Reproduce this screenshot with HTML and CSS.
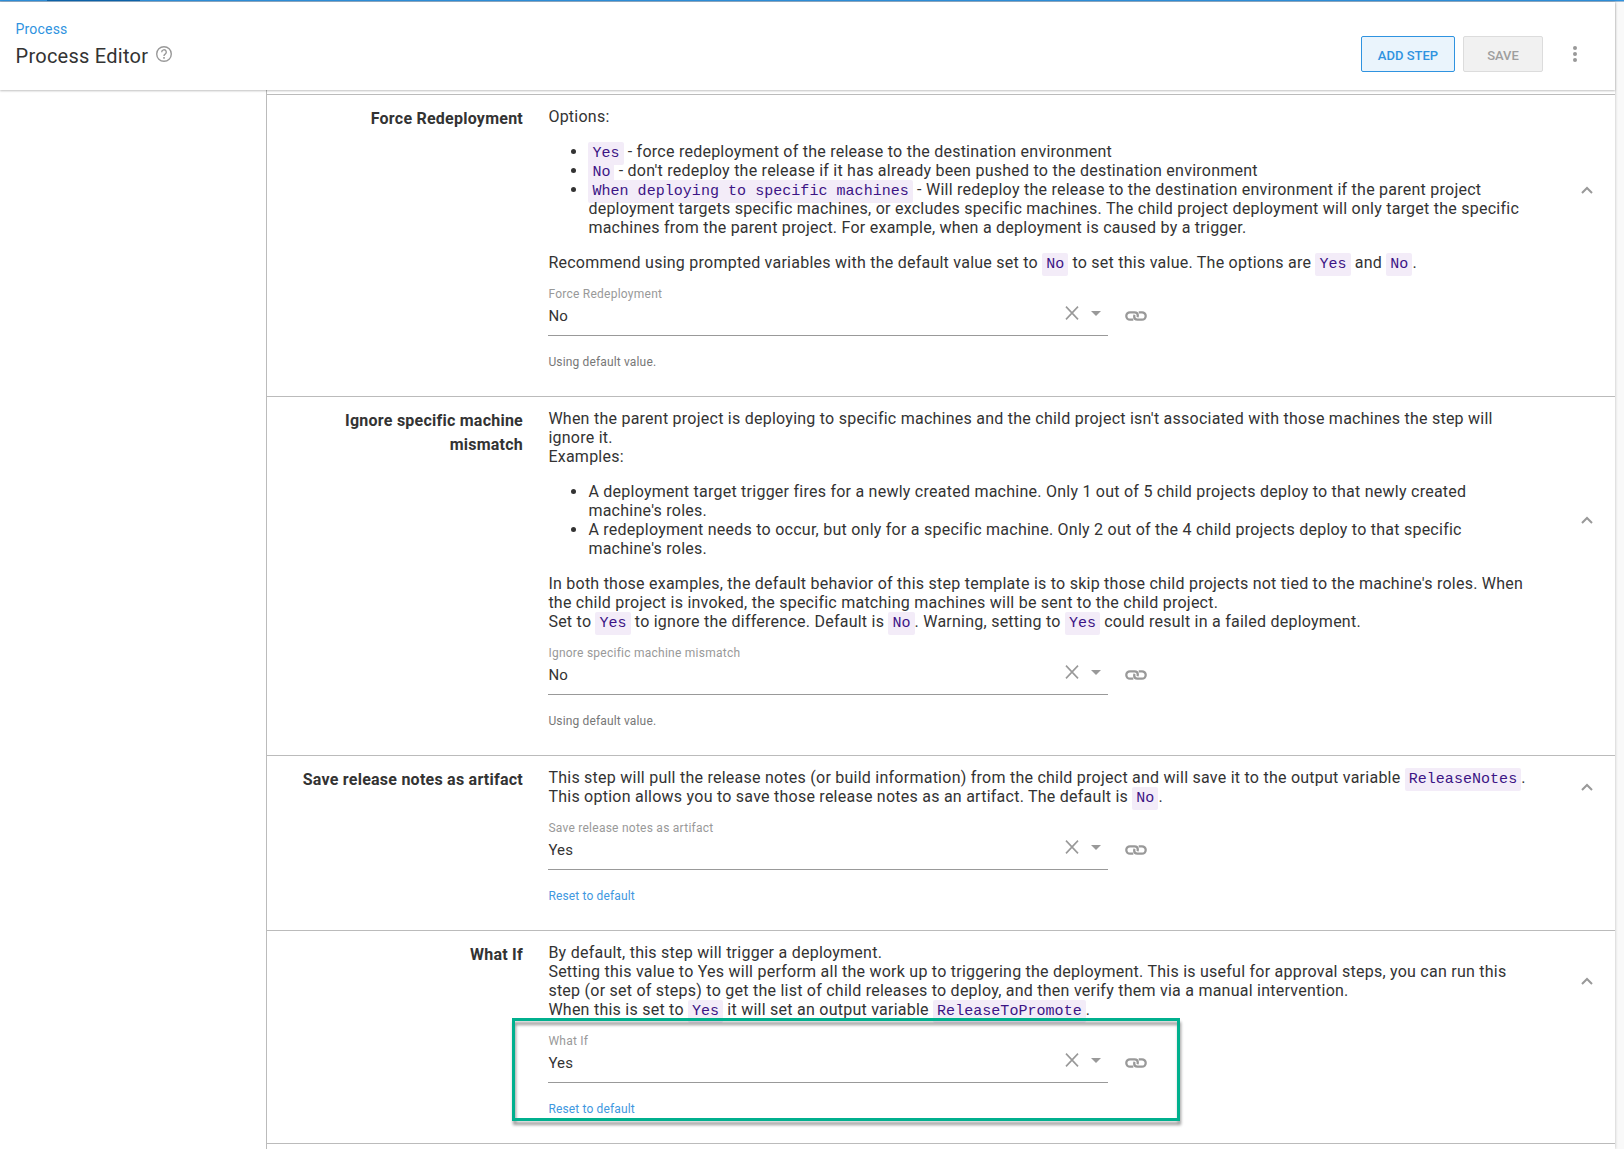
FILE: index.html
```html
<!DOCTYPE html>
<html lang="en">
<head>
<meta charset="utf-8">
<title>Process Editor</title>
<link rel="stylesheet" href="styles.css">
</head>
<body>
<svg class="sprite" aria-hidden="true">
  <symbol id="clear" viewBox="0 0 14 14"><path d="M1 .6 13 13.4M13 .6 1 13.4" fill="none" stroke="currentColor" stroke-width="1.6"/></symbol>
  <symbol id="caret" viewBox="0 0 10 5"><path d="M0 0h10L5 5z" fill="currentColor"/></symbol>
  <symbol id="link" viewBox="0 0 22 10"><g fill="none" stroke="currentColor" stroke-width="2.3"><path d="M8.300 8.700H5a3.700 3.700 0 0 1 0-7.400h4.600c2 0 3.200 1.300 3.200 3.200 0 .7-.2 1.200-.5 1.600"/><path d="M13.700 1.300H17a3.700 3.700 0 0 1 0 7.400h-4.600c-2 0-3.200-1.300-3.200-3.200 0-.7.2-1.200.5-1.600"/></g></symbol>
  <symbol id="chevron" viewBox="0 0 12 8"><path d="M1 7l5-5 5 5" fill="none" stroke="currentColor" stroke-width="2"/></symbol>
</svg>
<div class="topbar"><div class="topbar-active"></div></div>
<div class="page">
  <header class="header">
    <div class="titles">
      <a class="breadcrumb">Process</a>
      <div class="title-row">
        <h1>Process Editor</h1>
        <svg class="help" viewBox="0 0 16 16"><circle cx="8" cy="8" r="7.300" fill="none" stroke="currentColor" stroke-width="1.400"/><path d="M5.700 6.200a2.300 2.300 0 1 1 3.500 1.900C8.400 8.600 8 9 8 10" fill="none" stroke="currentColor" stroke-width="1.400"/><path d="M7.200 11.100h1.600v1.600H7.200z" fill="currentColor"/></svg>
      </div>
    </div>
    <div class="actions">
      <button class="btn btn-primary">ADD STEP</button>
      <button class="btn btn-disabled">SAVE</button>
      <svg class="more" viewBox="0 0 4 16"><g fill="currentColor"><circle cx="2" cy="2" r="2"/><circle cx="2" cy="8" r="2"/><circle cx="2" cy="14" r="2"/></g></svg>
    </div>
  </header>
  <main class="form">
    <section class="row">
      <h2>Force Redeployment</h2>
      <div class="content">
        <div class="summary">
          <div class="desc">
            <p>Options:</p>
            <ul>
              <li><code>Yes</code> - force redeployment of the release to the destination environment</li>
              <li><code>No</code> - don't redeploy the release if it has already been pushed to the destination environment</li>
              <li><code>When deploying to specific machines</code> - Will redeploy the release to the destination environment if the parent project<br>deployment targets specific machines, or excludes specific machines. The child project deployment will only target the specific<br>machines from the parent project. For example, when a deployment is caused by a trigger.</li>
            </ul>
            <p>Recommend using prompted variables with the default value set to <code>No</code> to set this value. The options are <code>Yes</code> and <code>No</code>.</p>
          </div>
          <svg class="chevron"><use href="#chevron"/></svg>
        </div>
        <div class="field">
          <div class="select">
            <div class="label">Force Redeployment</div>
            <div class="value">No</div>
            <svg class="clear"><use href="#clear"/></svg><svg class="caret"><use href="#caret"/></svg>
          </div>
          <svg class="link"><use href="#link"/></svg>
        </div>
        <div class="note">Using default value.</div>
      </div>
    </section>
    <section class="row">
      <h2>Ignore specific machine mismatch</h2>
      <div class="content">
        <div class="summary">
          <div class="desc">
            <p>When the parent project is deploying to specific machines and the child project isn't associated with those machines the step will<br>ignore it.<br>Examples:</p>
            <ul>
              <li>A deployment target trigger fires for a newly created machine. Only 1 out of 5 child projects deploy to that newly created<br>machine's roles.</li>
              <li>A redeployment needs to occur, but only for a specific machine. Only 2 out of the 4 child projects deploy to that specific<br>machine's roles.</li>
            </ul>
            <p>In both those examples, the default behavior of this step template is to skip those child projects not tied to the machine's roles. When<br>the child project is invoked, the specific matching machines will be sent to the child project.<br>Set to <code>Yes</code> to ignore the difference. Default is <code>No</code>. Warning, setting to <code>Yes</code> could result in a failed deployment.</p>
          </div>
          <svg class="chevron"><use href="#chevron"/></svg>
        </div>
        <div class="field">
          <div class="select">
            <div class="label">Ignore specific machine mismatch</div>
            <div class="value">No</div>
            <svg class="clear"><use href="#clear"/></svg><svg class="caret"><use href="#caret"/></svg>
          </div>
          <svg class="link"><use href="#link"/></svg>
        </div>
        <div class="note">Using default value.</div>
      </div>
    </section>
    <section class="row">
      <h2>Save release notes as artifact</h2>
      <div class="content">
        <div class="summary">
          <div class="desc">
            <p>This step will pull the release notes (or build information) from the child project and will save it to the output variable <code>ReleaseNotes</code>.<br>This option allows you to save those release notes as an artifact. The default is <code>No</code>.</p>
          </div>
          <svg class="chevron"><use href="#chevron"/></svg>
        </div>
        <div class="field">
          <div class="select">
            <div class="label">Save release notes as artifact</div>
            <div class="value">Yes</div>
            <svg class="clear"><use href="#clear"/></svg><svg class="caret"><use href="#caret"/></svg>
          </div>
          <svg class="link"><use href="#link"/></svg>
        </div>
        <div class="note note-link">Reset to default</div>
      </div>
    </section>
    <section class="row">
      <h2>What If</h2>
      <div class="content">
        <div class="summary">
          <div class="desc">
            <p>By default, this step will trigger a deployment.<br>Setting this value to Yes will perform all the work up to triggering the deployment. This is useful for approval steps, you can run this<br>step (or set of steps) to get the list of child releases to deploy, and then verify them via a manual intervention.<br>When this is set to <code>Yes</code> it will set an output variable <code>ReleaseToPromote</code>.</p>
          </div>
          <svg class="chevron"><use href="#chevron"/></svg>
        </div>
        <div class="field">
          <div class="select">
            <div class="label">What If</div>
            <div class="value">Yes</div>
            <svg class="clear"><use href="#clear"/></svg><svg class="caret"><use href="#caret"/></svg>
          </div>
          <svg class="link"><use href="#link"/></svg>
        </div>
        <div class="note note-link">Reset to default</div>
        <div class="callout"></div>
      </div>
    </section>
    <div class="row-end"></div>
  </main>
</div>
</body>
</html>
```
FILE: styles.css
```css
* { box-sizing: border-box; }
body {
  margin: 0;
  height: 1149px;
  overflow: hidden;
  background: #f9f9f9;
  color: #333;
  font: 16px/19px Roboto, sans-serif;
}
.sprite { display: none; }
svg { flex: none; color: #999; }
h1, h2, p { margin: 0; font-weight: 400; }
.topbar { height: 2px; background: #2f93e0; border-bottom: 1px solid #9cb9d3; }
.topbar-active { width: 93px; height: 1px; margin-left: 47px; background: #0d67b0; }
.page {
  width: 1615px;
  height: 1147px;
  background: #fff;
  box-shadow: 0 0 3px rgba(0, 0, 0, .25);
}
.header {
  position: relative;
  display: flex;
  justify-content: space-between;
  height: 88px;
  padding: 17px 38px 0 15.5px;
  background: #fff;
  box-shadow: 0 1px 2px rgba(0, 0, 0, .25);
}
.breadcrumb { display: block; font-size: 14px; line-height: 20px; color: #2f93e0; letter-spacing: .2px; }
.title-row { display: flex; align-items: flex-start; gap: 8px; margin-top: 5px; }
h1 { font-size: 20px; line-height: 24px; letter-spacing: .26px; }
.help { width: 16px; height: 16px; margin-top: 2px; }
.actions { display: flex; align-items: flex-start; padding-top: 17px; }
.btn {
  height: 36px;
  padding: 3px 0 0;
  border: 1px solid;
  border-radius: 2px;
  font: 500 13px/16px Roboto, sans-serif;
}
.btn-primary { width: 94px; color: #2f93e0; background: #eaf4fc; border-color: #2f93e0; }
.btn-disabled { width: 80px; margin-left: 8px; color: #9e9e9e; background: #f1f1f1; border-color: #dcdcdc; }
.more { width: 4px; height: 16px; margin: 10px 0 0 30px; }
.form { margin-left: 266px; height: 1059px; padding-top: 4px; border-left: 1px solid #bbb; }
.row { display: flex; border-top: 1px solid #bbb; }
h2 {
  width: 256px;
  padding: 12px 0 0 30px;
  font-size: 16px;
  line-height: 24px;
  font-weight: 700;
  letter-spacing: .24px;
  text-align: right;
}
.content { position: relative; margin-left: 25px; padding-top: 12px; }
.summary { display: flex; align-items: center; }
.desc { width: 985px; padding-left: .4px; white-space: nowrap; letter-spacing: .246px; }
ul { margin: 16px 0; padding-left: 40px; }
code {
  padding: 3px 4px;
  border-radius: 2px;
  background: #f3ecf8;
  color: #3c1485;
  font: 15px/0 "Liberation Mono", monospace;
  letter-spacing: .04px;
}
.field { display: flex; gap: 17px; }
.select { position: relative; width: 560px; height: 64px; padding: 13px 0 0 .4px; border-bottom: 1px solid #999; }
.label { font-size: 12px; line-height: 18px; color: #999; letter-spacing: .25px; }
.value { font-size: 15px; line-height: 20px; margin-top: 3px; letter-spacing: .2px; }
.clear { position: absolute; right: 29px; top: 34px; width: 14px; height: 14px; }
.caret { position: absolute; right: 7px; top: 39px; width: 10px; height: 5px; }
.link { width: 22px; height: 10px; margin-top: 39px; }
.note { height: 60px; padding: 16px 0 0 .4px; font-size: 12px; line-height: 20px; color: #777; letter-spacing: .15px; }
.note-link { color: #3f98e0; }
.chevron { width: 12px; height: 8px; margin-left: 48px; }
.callout {
  position: absolute;
  left: -36px;
  top: 87px;
  width: 668px;
  height: 103px;
  border: 3px solid #00b08e;
  filter: drop-shadow(1px 4px 1.5px rgba(0, 0, 0, .4));
}
.row-end { border-top: 1px solid #bbb; }
```
